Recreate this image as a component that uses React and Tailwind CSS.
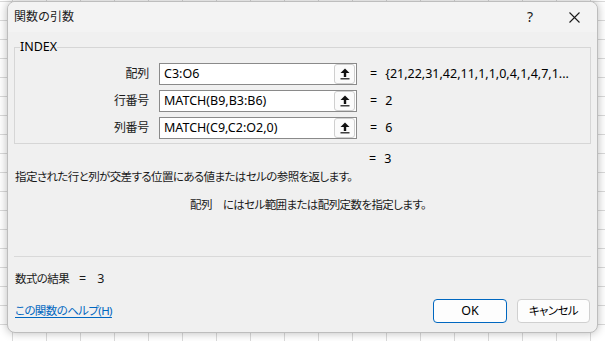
const FONT = "font-['Noto_Sans','Noto_Sans_CJK_JP',sans-serif]"
const JP = "text-[11.5px] tracking-[-0.6px] [font-feature-settings:'palt']"

function RefIcon() {
  return (
    <svg width="10" height="12" viewBox="0 0 10 12">
      <polygon points="0.5,5 5,0.5 9.5,5" fill="#111" />
      <rect x="3.8" y="4.5" width="2.4" height="4.5" fill="#111" />
      <rect x="0.5" y="10.2" width="9" height="1.2" fill="#111" />
    </svg>
  )
}

function ArgRow({ label, value, result }) {
  return (
    <div className="flex items-center h-[22px]">
      <div className="w-[134px] text-right text-[12px] tracking-[-0.3px] leading-[16px] text-[#1a1a1a]">{label}</div>
      <div className="ml-[10px] w-[198px] h-[22px] flex items-center bg-white border border-[#8a8a8a]">
        <span className="flex-1 pl-[4px] text-[12.5px] leading-[16px] text-black">{value}</span>
        <button className="mr-[1px] w-[21px] h-[20px] flex items-center justify-center bg-[#fbfbfb] border border-[#cfcfcf] rounded-[3px]">
          <RefIcon />
        </button>
      </div>
      <span className="ml-[13px] text-[12.5px] leading-[16px] text-black">=</span>
      <span className="ml-[8px] text-[12.5px] leading-[16px] text-black whitespace-nowrap">{result}</span>
    </div>
  )
}

export default function App() {
  return (
    <div className={`${FONT} w-[605px] h-[341px] overflow-hidden bg-white bg-[linear-gradient(#dadada_1px,transparent_1px),linear-gradient(90deg,#dadada_1px,transparent_1px)] bg-[size:34px_19px] bg-[position:12px_1px]`}>
      <div className="ml-[7px] mt-[1px] w-[591px] h-[332px] flex flex-col rounded-[8px] overflow-hidden border border-[#bdbdbd] bg-[#f0f0f0] shadow-[0_0_10px_rgba(0,0,0,0.28)]">
        {/* title bar */}
        <div className="h-[30px] flex items-center bg-[#f3f3f3]">
          <span className="pl-[6px] text-[12px] leading-[16px] text-[#1a1a1a]">関数の引数</span>
          <span className="ml-auto mr-[36px] text-[14px] leading-[16px] text-[#1a1a1a]">?</span>
          <svg width="11" height="11" viewBox="0 0 11 11" className="mr-[17px]">
            <path d="M0.5 0.5 L10.5 10.5 M10.5 0.5 L0.5 10.5" stroke="#1a1a1a" strokeWidth="1.1" />
          </svg>
        </div>

        <div className="flex-1 flex flex-col px-[6px]">
          {/* argument group */}
          <div className="relative mt-[15px] border border-[#d6d6d6] pt-[15px] pb-[4px] flex flex-col gap-[5px]">
            <span className="absolute -top-[9px] left-[5px] bg-[#f0f0f0] text-[12.5px] leading-[16px] text-black">INDEX</span>
            <ArgRow label="配列" value="C3:O6" result="{21,22,31,42,11,1,1,0,4,1,4,7,1..." />
            <ArgRow label="行番号" value="MATCH(B9,B3:B6)" result="2" />
            <ArgRow label="列番号" value="MATCH(C9,C2:O2,0)" result="6" />
          </div>

          <div className="mt-[7px] pl-[355px] flex text-[12.5px] leading-[16px] text-black">
            <span>=</span>
            <span className="ml-[8px]">3</span>
          </div>

          <p className={`mt-[2px] pl-[1px] leading-[16px] text-[#1a1a1a] ${JP}`}>
            指定された行と列が交差する位置にある値またはセルの参照を返します。
          </p>

          <p className={`mt-[12px] pl-[176px] flex leading-[16px] text-[#1a1a1a] ${JP}`}>
            <span>配列</span>
            <span className="ml-[11px]">にはセル範囲または配列定数を指定します。</span>
          </p>

          <div className="mt-[43px] h-px bg-[#d9d9d9]" />

          <p className={`mt-[14px] pl-[1px] flex leading-[16px] text-[#1a1a1a] ${JP}`}>
            <span className="w-[64px]">数式の結果</span>
            <span className="text-[12.5px] tracking-normal">=</span>
            <span className="ml-[11px] text-[12.5px] tracking-normal">3</span>
          </p>

          <div className="mt-[12px] flex items-center h-[24px]">
            <a className={`pl-[1px] leading-[16px] text-[#0067c0] underline underline-offset-2 ${JP}`}>
              この関数のヘルプ(H)
            </a>
            <button className="ml-auto w-[74px] h-[24px] bg-[#fdfdfd] border border-[#0067c0] rounded-[4px] text-[12.5px] leading-[16px] text-black">
              OK
            </button>
            <button className={`ml-[10px] mr-[1px] w-[73px] h-[24px] bg-[#fdfdfd] border border-[#d0d0d0] rounded-[4px] leading-[16px] text-black ${JP}`}>
              キャンセル
            </button>
          </div>
        </div>
      </div>
    </div>
  )
}
